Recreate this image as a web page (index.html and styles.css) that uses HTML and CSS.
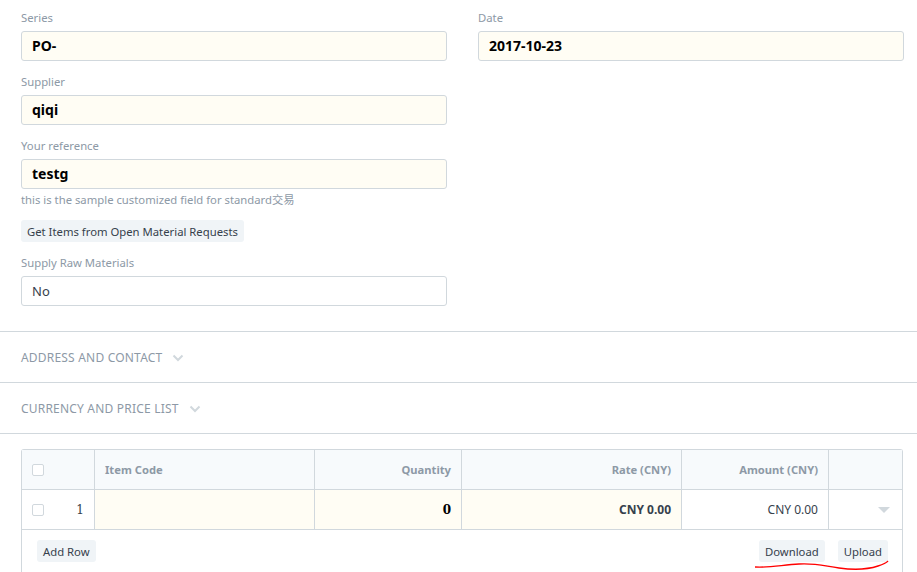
FILE: index.html
```html
<!DOCTYPE html>
<html lang="en">
<head>
  <meta charset="UTF-8">
  <meta name="viewport" content="width=device-width, initial-scale=1.0">
  <title>Purchase Order</title>
  <link rel="stylesheet" href="styles.css">
</head>
<body>

  <!-- Main fields -->
  <div class="form-section first">
    <div class="form-column">
      <div class="field">
        <label class="control-label">Series</label>
        <div class="control-input bold">PO-</div>
      </div>
      <div class="field">
        <label class="control-label">Supplier</label>
        <div class="control-input bold">qiqi</div>
      </div>
      <div class="field">
        <label class="control-label">Your reference</label>
        <div class="control-input bold">testg</div>
        <p class="help-box">this is the sample customized field for standard交易</p>
      </div>
      <div class="field">
        <button class="btn">Get Items from Open Material Requests</button>
      </div>
      <div class="field">
        <label class="control-label">Supply Raw Materials</label>
        <div class="control-input">No</div>
      </div>
    </div>
    <div class="form-column">
      <div class="field">
        <label class="control-label">Date</label>
        <div class="control-input bold">2017-10-23</div>
      </div>
    </div>
  </div>

  <!-- Collapsed sections -->
  <div class="section-head">
    ADDRESS AND CONTACT
    <svg class="chevron" width="12" height="8" viewBox="0 0 12 8"><path d="M1.5 1.5 L6 6 L10.5 1.5" fill="none" stroke="#d1d8dd" stroke-width="2"/></svg>
  </div>
  <div class="section-head">
    CURRENCY AND PRICE LIST
    <svg class="chevron" width="12" height="8" viewBox="0 0 12 8"><path d="M1.5 1.5 L6 6 L10.5 1.5" fill="none" stroke="#d1d8dd" stroke-width="2"/></svg>
  </div>

  <!-- Items grid -->
  <div class="grid-section">
    <div class="grid">
      <div class="grid-row grid-heading">
        <div class="col col-idx"><span class="checkbox"></span></div>
        <div class="col col-item">Item Code</div>
        <div class="col col-qty right">Quantity</div>
        <div class="col col-rate right">Rate (CNY)</div>
        <div class="col col-amount right">Amount (CNY)</div>
        <div class="col col-edit"></div>
      </div>
      <div class="grid-row">
        <div class="col col-idx"><span class="checkbox"></span><span class="row-index">1</span></div>
        <div class="col col-item filled"></div>
        <div class="col col-qty right filled num">0</div>
        <div class="col col-rate right filled strong">CNY 0.00</div>
        <div class="col col-amount right">CNY 0.00</div>
        <div class="col col-edit"><span class="caret"></span></div>
      </div>
      <div class="grid-footer">
        <button class="btn btn-xs">Add Row</button>
        <div class="grid-actions">
          <button class="btn btn-xs">Download</button>
          <button class="btn btn-xs">Upload</button>
        </div>
        <!-- red annotation under the buttons -->
        <svg class="scribble" width="136" height="12" viewBox="0 0 136 12">
          <path d="M1 7 C 15 8, 28 5, 45 4 S 70 6, 85 8 S 115 9, 124 6 S 133 2, 134 1" fill="none" stroke="#f00" stroke-width="1.4"/>
        </svg>
      </div>
    </div>
  </div>

</body>
</html>
```

FILE: styles.css
```css
* {
  margin: 0;
  padding: 0;
  box-sizing: border-box;
}

body {
  background: #fff;
  color: #36414c;
  font-family: "Noto Sans", "Open Sans", "Noto Sans CJK SC", sans-serif;
  font-size: 11.3px;
  width: 917px;
  overflow: hidden;
}

.form-section {
  display: grid;
  grid-template-columns: 1fr 1fr;
  column-gap: 31px;
  padding: 8px 13px 25px 21px;
  border-bottom: 1px solid #d1d8dd;
}

.field {
  margin-bottom: 11px;
}

.field:last-child {
  margin-bottom: 0;
}

.control-label {
  display: block;
  color: #8d99a6;
  font-size: 11.3px;
  line-height: 19px;
  margin-bottom: 4px;
}

.control-input {
  height: 30px;
  line-height: 28px;
  padding: 0 10px;
  border: 1px solid #d1d8dd;
  border-radius: 3px;
  background: #fff;
  color: #36414c;
  font-size: 13px;
}

.control-input.bold {
  background: #fffdf4;
  color: #000;
  font-weight: bold;
  font-size: 14px;
}

.help-box {
  color: #8d99a6;
  font-size: 11.3px;
  line-height: 16px;
  margin-top: 3px;
  margin-bottom: 12px;
}

.btn {
  background: #f0f4f7;
  border: none;
  border-radius: 3px;
  color: #36414c;
  font-family: inherit;
  font-size: 11.3px;
  height: 22px;
  padding: 0 6px;
  cursor: pointer;
}

.section-head {
  display: flex;
  align-items: center;
  height: 51px;
  padding-left: 21px;
  border-bottom: 1px solid #d1d8dd;
  color: #8d99a6;
  font-size: 12px;
  letter-spacing: 0.2px;
}

.chevron {
  margin-left: 10px;
  margin-top: 1px;
}

.grid-section {
  padding: 15px 14px 0 21px;
}

.grid {
  border: 1px solid #d1d8dd;
  border-bottom: none;
  border-radius: 3px 3px 0 0;
}

.grid-row {
  display: flex;
  height: 40px;
  border-bottom: 1px solid #d1d8dd;
}

.grid-heading {
  background: #f7fafc;
  color: #8d99a6;
  font-weight: bold;
}

.col {
  display: flex;
  align-items: center;
  padding: 0 10px;
  border-right: 1px solid #d1d8dd;
  font-size: 12px;
}

.grid-heading .col {
  font-size: 11.2px;
}

.col.right {
  justify-content: flex-end;
}

.col-idx { width: 73px; }
.col-item { width: 220px; }
.col-qty { width: 147px; }
.col-rate { width: 220px; }
.col-amount { width: 147px; }
.col-edit {
  flex: 1;
  border-right: none;
  justify-content: flex-end;
}

.filled {
  background: #fffdf4;
}

.strong {
  font-weight: bold;
}

.num {
  font-family: "DejaVu Serif", serif;
  font-weight: bold;
  color: #000;
}

.checkbox {
  width: 12px;
  height: 12px;
  border: 1px solid #d1d8dd;
  border-radius: 2px;
  background: #fff;
}

.row-index {
  margin-left: auto;
  font-family: "DejaVu Serif", serif;
  color: #36414c;
}

.caret {
  width: 0;
  height: 0;
  border-left: 6px solid transparent;
  border-right: 6px solid transparent;
  border-top: 6px solid #d1d8dd;
  margin-right: 2px;
}

.grid-footer {
  position: relative;
  display: flex;
  justify-content: space-between;
  align-items: flex-start;
  padding: 10px 14px 20px 15px;
}

.grid-actions {
  display: flex;
  gap: 13px;
}

.scribble {
  position: absolute;
  right: 12px;
  top: 30px;
}
```
